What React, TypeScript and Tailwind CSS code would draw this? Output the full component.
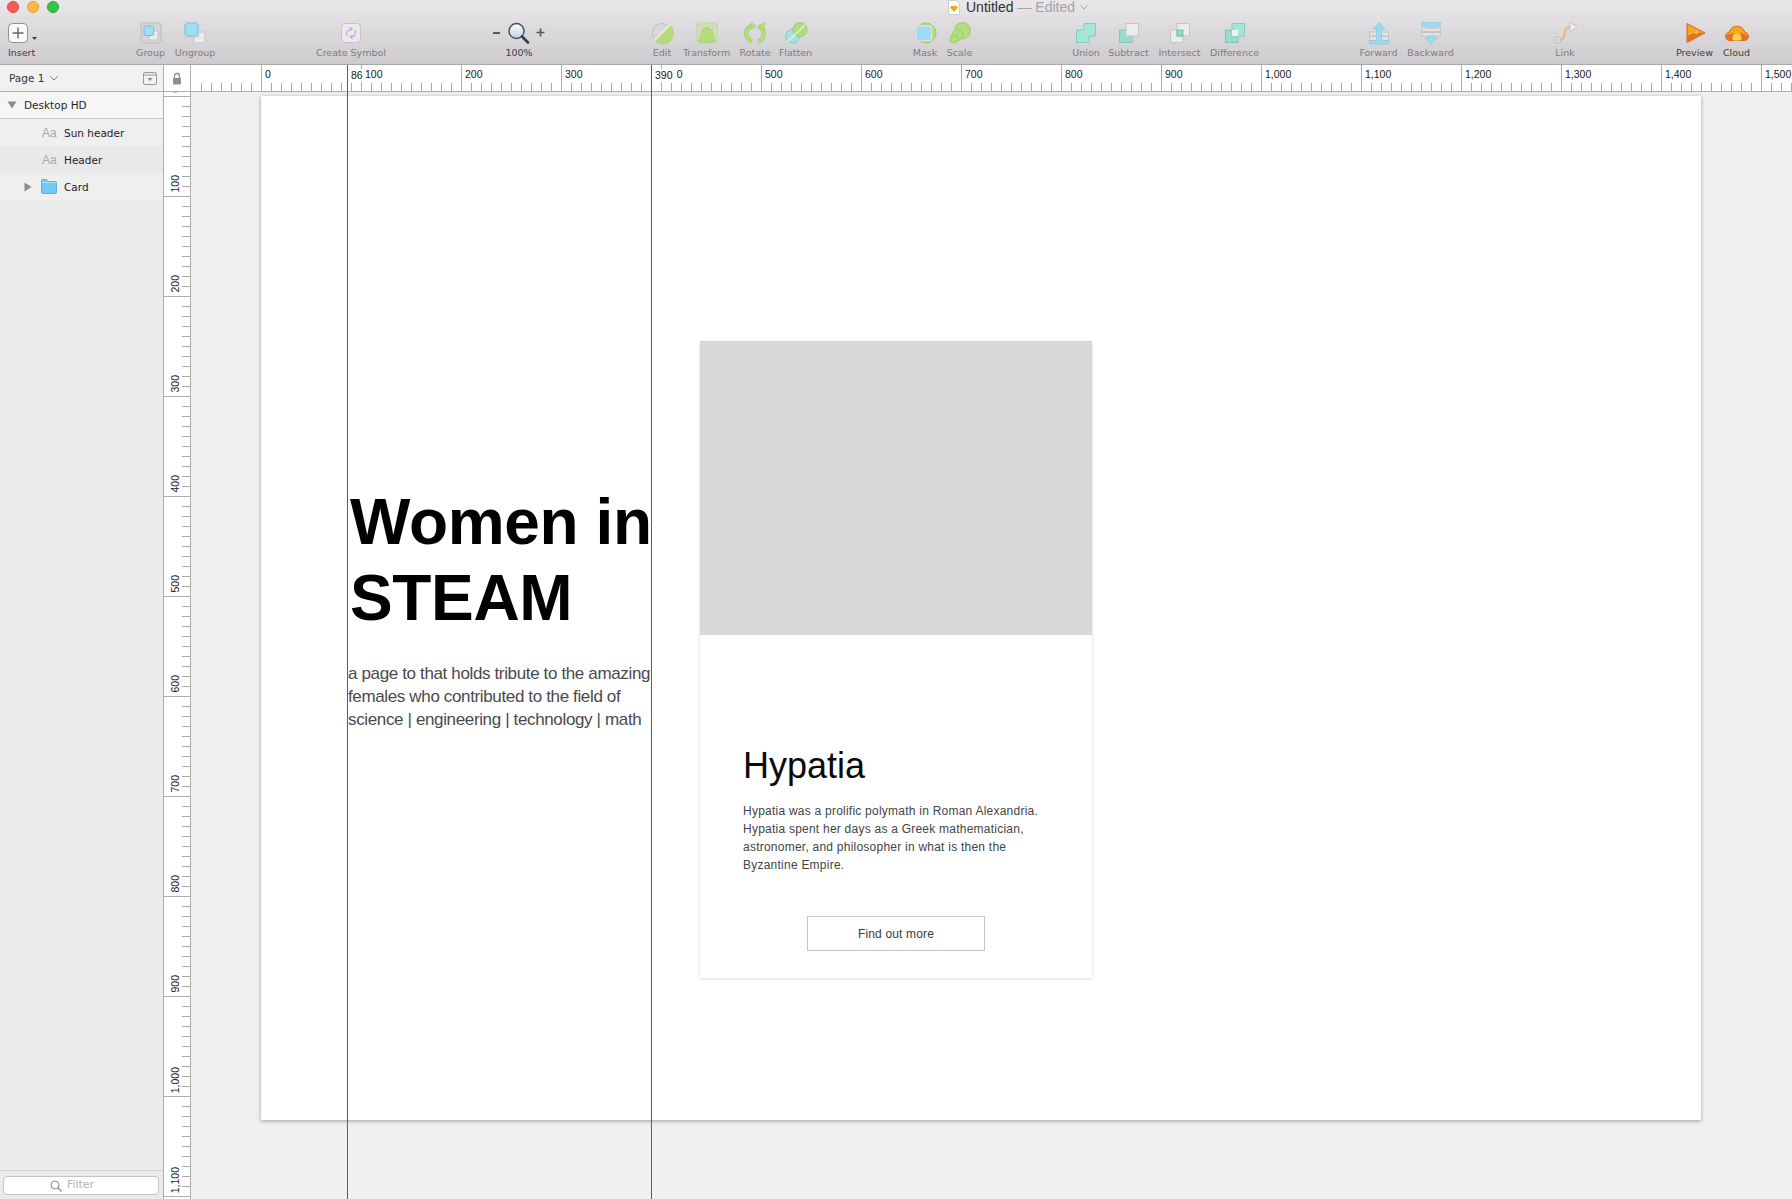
import React from 'react';

const LABEL = "font-['DejaVu_Sans',sans-serif]";
const RULER = "font-['Liberation_Sans',sans-serif]";

const Handles = ({ pts }: { pts: [number, number][] }) => (
  <>
    {pts.map(([x, y], i) => (
      <rect key={i} x={x - 1} y={y - 1} width="2" height="2" fill="#f4f4f4" stroke="#bdbdbd" strokeWidth="0.5" />
    ))}
  </>
);

const Svg = ({ children, w = 24 }: { children: React.ReactNode; w?: number }) => (
  <svg width={w} height="24" viewBox={`0 0 ${w} 24`} className="shrink-0">
    {children}
  </svg>
);

const icons: Record<string, React.ReactNode> = {
  Insert: (
    <Svg w={30}>
      <rect x="1.5" y="2.5" width="19" height="19" rx="4" fill="#fafafa" stroke="#8f8f8f" />
      <path d="M11 6.5v11M5.5 12h11" stroke="#6a6a6a" strokeWidth="1.4" />
      <path d="M25 16h5l-2.5 3z" fill="#3c3c3c" />
    </Svg>
  ),
  Group: (
    <Svg>
      <rect x="2" y="2" width="20" height="20" fill="#d6d4d6" stroke="#bcbcbc" />
      <rect x="10" y="10" width="9" height="9" fill="#ececec" stroke="#c4c4c4" />
      <rect x="5" y="5" width="9.5" height="9.5" rx="1.5" fill="#a0dcf2" stroke="#72bedb" />
      <Handles pts={[[2, 2], [22, 2], [2, 22], [22, 22]]} />
    </Svg>
  ),
  Ungroup: (
    <Svg>
      <rect x="11" y="11" width="11" height="11" fill="#ececec" stroke="#c4c4c4" />
      <rect x="2" y="2" width="13" height="13" rx="1" fill="#a0dcf2" stroke="#72bedb" />
      <Handles pts={[[2, 2], [15, 2], [2, 15], [15, 15], [22, 11], [11, 22], [22, 22]]} />
    </Svg>
  ),
  'Create Symbol': (
    <Svg>
      <rect x="2.5" y="2.5" width="19" height="19" rx="3.5" fill="#ebe9eb" stroke="#c6c6c6" />
      <path d="M8 15c-1.500-3 .5-7 4-7M16 9c1.500 3-.5 7-4 7" fill="none" stroke="#d79cea" strokeWidth="1.2" />
      <path d="M10.500 6l2.500 2-2.500 2M13.500 14l-2.500 2 2.500 2" fill="none" stroke="#d79cea" strokeWidth="1.2" />
    </Svg>
  ),
  Edit: (
    <Svg>
      <circle cx="12" cy="12" r="9.5" fill="#dad8da" stroke="#bdbdbd" />
      <path d="M20 4.5A10 10 0 0 1 5 20z" fill="#b4dc7c" stroke="#a0cb68" strokeWidth="0.6" />
      <path d="M4 20L20 4" stroke="#f2f2f2" strokeWidth="1.2" />
    </Svg>
  ),
  Transform: (
    <Svg>
      <rect x="2" y="2" width="20" height="20" fill="#cfe2ad" stroke="#c6cfb6" />
      <path d="M7.5 7h9L20 21H4z" fill="#b4dc7c" stroke="#a0cb68" strokeWidth="0.6" />
      <Handles pts={[[2, 2], [22, 2], [2, 22], [22, 22], [7.5, 7], [16.5, 7]]} />
    </Svg>
  ),
  Rotate: (
    <Svg>
      <path d="M9.500 4.500A8 8 0 0 0 9 20" fill="none" stroke="#9fca68" strokeWidth="4.200" />
      <path d="M9.500 4.500A8 8 0 0 0 9 20" fill="none" stroke="#b4dc7c" strokeWidth="3.200" />
      <path d="M16 5.500A8 8 0 0 1 15 20.500" fill="none" stroke="#9fca68" strokeWidth="4.200" />
      <path d="M16 5.500A8 8 0 0 1 15 20.500" fill="none" stroke="#b4dc7c" strokeWidth="3.200" />
      <path d="M8 9V1l5 4zM22 1l-1 8-7-3z" fill="#b4dc7c" stroke="#9fca68" strokeWidth="0.500" />
    </Svg>
  ),
  Flatten: (
    <Svg>
      <circle cx="8.500" cy="15" r="7" fill="#a4e3da" stroke="#86cbc0" />
      <circle cx="16" cy="8.500" r="7" fill="#b4dc7c" stroke="#a0cb68" />
      <path d="M3 21L21 4" stroke="#e8f4e8" strokeWidth="1.100" />
    </Svg>
  ),
  Mask: (
    <Svg>
      <circle cx="13" cy="12" r="10" fill="#b4dc7c" stroke="#a0cb68" />
      <rect x="3" y="5" width="15.500" height="14.500" rx="1" fill="#9ddcf2" stroke="#e0e0e0" strokeWidth="1.400" />
    </Svg>
  ),
  Scale: (
    <Svg>
      <circle cx="14.500" cy="9.500" r="8" fill="#b4dc7c" stroke="#a0cb68" />
      <circle cx="9.500" cy="14" r="5.500" fill="#b4dc7c" stroke="#a0cb68" />
      <circle cx="6" cy="18" r="4" fill="#b4dc7c" stroke="#a0cb68" />
    </Svg>
  ),
  Union: (
    <Svg>
      <path d="M10 2.500h11.500V15H15v6.500H2.500V9H10z" fill="#a6e6da" stroke="#84cdbf" />
    </Svg>
  ),
  Subtract: (
    <Svg>
      <rect x="2.500" y="9" width="12.500" height="12.500" fill="#96dccf" stroke="#7ec7ba" />
      <rect x="9" y="2.500" width="12.500" height="12.500" fill="#ececec" stroke="#c6c6c6" />
    </Svg>
  ),
  Intersect: (
    <Svg>
      <rect x="2.500" y="9" width="12.500" height="12.500" fill="#ececec" stroke="#c6c6c6" />
      <rect x="9" y="2.500" width="12.500" height="12.500" fill="#ececec" stroke="#c6c6c6" />
      <rect x="9" y="9" width="6" height="6" fill="#8edbcc" stroke="#6fc3b4" />
    </Svg>
  ),
  Difference: (
    <Svg>
      <rect x="2.500" y="9" width="12.500" height="12.500" fill="#96dccf" stroke="#7ec7ba" />
      <rect x="9" y="2.500" width="12.500" height="12.500" fill="#a6e6da" stroke="#84cdbf" />
      <rect x="9" y="9" width="6" height="6" fill="#f0f0f0" />
    </Svg>
  ),
  Forward: (
    <Svg>
      <rect x="2.500" y="11" width="19" height="4" fill="#e2e2e2" stroke="#c4c4c4" />
      <rect x="2.500" y="15.500" width="19" height="4" fill="#e2e2e2" stroke="#c4c4c4" />
      <path d="M12 1.500L18 8h-3.500v11.500h7V23h-19v-3.500h7V8H6z" fill="#9cdcf0" stroke="#7cc6de" strokeWidth="0.6" />
    </Svg>
  ),
  Backward: (
    <Svg>
      <path d="M2.500 1.500h19V5h-7v2h-5V5h-7z" fill="#9cdcf0" stroke="#7cc6de" strokeWidth="0.6" />
      <rect x="2.500" y="7" width="19" height="3.500" fill="#e2e2e2" stroke="#c4c4c4" />
      <rect x="2.500" y="11.500" width="19" height="3.500" fill="#e2e2e2" stroke="#c4c4c4" />
      <path d="M9.500 15.500h5V17H18l-6 6-6-6h3.500z" fill="#9cdcf0" stroke="#7cc6de" strokeWidth="0.6" />
    </Svg>
  ),
  Link: (
    <Svg>
      <path d="M5 19c6 0 6-3 7-8 .6-3 2-5 6-5" fill="none" stroke="#e8b98a" strokeWidth="2.600" />
      <circle cx="4.500" cy="19" r="3" fill="#ececec" stroke="#b8b8b8" />
      <circle cx="4.500" cy="19" r="0.900" fill="#999" />
      <path d="M17 1l7 5-7 5z" fill="#efefef" stroke="#c4c4c4" />
    </Svg>
  ),
  Preview: (
    <Svg>
      <path d="M4 2.500L22 12 4 21.500z" fill="#f6a623" stroke="#d9651c" />
      <path d="M4 21.500L22 12l-9-.5L4 15z" fill="#e3731f" />
      <circle cx="13.500" cy="11.500" r="1.500" fill="#f8c855" />
    </Svg>
  ),
  Cloud: (
    <Svg>
      <path d="M5 19.500c-3 0-4.500-2-4.500-4.200 0-2.300 1.700-4 3.800-4 .8-3.700 4-6 7.700-6s6.900 2.300 7.700 6c2.100 0 3.800 1.700 3.800 4 0 2.200-1.500 4.200-4.500 4.200z" fill="#f5a623" stroke="#d9651c" />
      <path d="M7 19.500c-1-2-1-6 1-7.500M17 19.500c1-2 1-6-1-7.500" fill="none" stroke="#d9651c" strokeWidth="1.200" />
      <path d="M8 19.500c0-3 1-7 4-7s4 4 4 7z" fill="#fbd35a" />
      <path d="M1 15.500c0 2 1.500 4 4 4h2c-1-2-1-4 0-6-2-1-5 0-6 2zM23 15.500c0 2-1.500 4-4 4h-2c1-2 1-4 0-6 2-1 5 0 6 2z" fill="#e3731f" />
    </Svg>
  ),
};

const Tool = ({ label, className, dark }: { label: string; className: string; dark?: boolean }) => (
  <div className={`flex flex-col items-center shrink-0 ${className}`}>
    <div className="h-[25px] flex items-center justify-center">{icons[label]}</div>
    <div className={`${LABEL} pt-[1px] text-[9.5px] leading-[14px] whitespace-nowrap ${dark ? 'text-[#3e3e3e]' : 'text-[#7f7d7f]'}`}>
      {label}
    </div>
  </div>
);

const Toolbar = () => (
  <header className="h-[65px] shrink-0 border-b border-[#a9a9a9] bg-gradient-to-b from-[#e9e7e9] to-[#cdcbcd]">
    <div className="h-[20px] flex items-start relative">
      <div className="flex gap-[8px] pl-[7px] pt-[1px]">
        <span className="size-[12px] rounded-full bg-[#fc5b57] border border-[#e2463f]" />
        <span className="size-[12px] rounded-full bg-[#fdbc40] border border-[#dea034]" />
        <span className="size-[12px] rounded-full bg-[#33c748] border border-[#27aa35]" />
      </div>
      <div className={`ml-[889px] flex items-center h-[15px] ${RULER} text-[14px]`}>
        <svg width="12" height="15" viewBox="0 0 12 15" className="mr-[6px]">
          <path d="M0.500 0.500h8l3 3v11h-11z" fill="#fdfdfd" stroke="#cfcfcf" />
          <path d="M3 6h6l1 1.500L6 12 2 7.500z" fill="#f5a623" />
        </svg>
        <span className="text-[#303030]">Untitled</span>
        <span className="text-[#a5a3a5] ml-[4px]">— Edited</span>
        <svg width="8" height="5" viewBox="0 0 8 5" className="ml-[5px]">
          <path d="M0.500 0.500L4 4l3.500-3.500" fill="none" stroke="#a5a3a5" />
        </svg>
      </div>
    </div>
    <div className="flex items-start">
      <Tool label="Insert" dark className="w-[27px] ml-[8px] [&>div:first-child]:w-[30px]" />
      <div className="flex gap-[10px] ml-[101px]">
        <Tool label="Group" className="w-[29px]" />
        <Tool label="Ungroup" className="w-[40px]" />
      </div>
      <Tool label="Create Symbol" className="w-[70px] ml-[101px]" />
      <div className="w-[58px] ml-[104px] flex flex-col items-center shrink-0">
        <div className="h-[25px] w-full flex items-center justify-between px-[3px]">
          <span className="w-[7px] h-[2px] bg-[#5a5a5a]" />
          <svg width="24" height="24" viewBox="0 0 24 24" className="shrink-0">
            <defs>
              <linearGradient id="lens" x1="0" y1="0" x2="0" y2="1">
                <stop offset="0" stopColor="#ffffff" />
                <stop offset="1" stopColor="#bcd3ea" />
              </linearGradient>
            </defs>
            <circle cx="10.500" cy="10" r="7.500" fill="url(#lens)" stroke="#4e4e4e" strokeWidth="1.400" />
            <path d="M16 15.500l6 6" stroke="#3e3e3e" strokeWidth="2.600" strokeLinecap="round" />
          </svg>
          <svg width="9" height="9" viewBox="0 0 9 9" className="shrink-0">
            <path d="M4.500 0.500v8M0.500 4.500h8" stroke="#5a5a5a" strokeWidth="1.700" />
          </svg>
        </div>
        <div className={`${LABEL} pt-[1px] text-[9.5px] leading-[14px] text-[#3e3e3e]`}>100%</div>
      </div>
      <div className="flex gap-[10px] ml-[105px]">
        <Tool label="Edit" className="w-[18px]" />
        <Tool label="Transform" className="w-[47px] ml-[2px]" />
        <Tool label="Rotate" className="w-[30px]" />
        <Tool label="Flatten" className="w-[33px] -ml-[1px]" />
      </div>
      <div className="flex gap-[10px] ml-[101px]">
        <Tool label="Mask" className="w-[24px]" />
        <Tool label="Scale" className="w-[25px]" />
      </div>
      <div className="flex gap-[10px] ml-[101px]">
        <Tool label="Union" className="w-[26px]" />
        <Tool label="Subtract" className="w-[41px] -ml-[1px]" />
        <Tool label="Intersect" className="w-[41px]" />
        <Tool label="Difference" className="w-[49px]" />
      </div>
      <div className="flex gap-[10px] ml-[100px]">
        <Tool label="Forward" className="w-[39px]" />
        <Tool label="Backward" className="w-[45px]" />
      </div>
      <Tool label="Link" className="w-[18px] ml-[103px]" />
      <div className="flex gap-[10px] ml-[102px]">
        <Tool label="Preview" dark className="w-[37px]" />
        <Tool label="Cloud" dark className="w-[27px]" />
      </div>
    </div>
  </header>
);

const Tri = ({ right }: { right?: boolean }) => (
  <svg width="10" height="10" viewBox="0 0 10 10" className="shrink-0">
    <path d={right ? 'M1.500 0.500L8.500 5 1.500 9.500z' : 'M0.500 1.500h9L5 8.500z'} fill="#8a8a8a" />
  </svg>
);

const Aa = () => (
  <span className={`${RULER} text-[12px] text-[#a9a9a9] w-[14px] ml-[42px] mr-[8px]`}>Aa</span>
);

const rowText = `${LABEL} pt-[2px] text-[10.500px] text-[#1e1e1e] whitespace-nowrap`;

const Sidebar = () => (
  <aside className="w-[164px] shrink-0 border-r border-[#aeaeae] bg-[#ebebeb] flex flex-col">
    <div className="h-[27px] shrink-0 border-b border-[#b4b4b4] bg-[#f1f1f1] flex items-center pl-[9px] pr-[6px]">
      <span className={`${LABEL} pt-[2px] text-[10.500px] text-[#333]`}>Page 1</span>
      <svg width="8" height="5" viewBox="0 0 8 5" className="ml-[6px]">
        <path d="M0.500 0.500L4 4l3.500-3.500" fill="none" stroke="#777" />
      </svg>
      <svg width="14" height="13" viewBox="0 0 14 13" className="ml-auto">
        <rect x="0.500" y="0.500" width="13" height="12" rx="1.500" fill="#f2f2f2" stroke="#9a9a9a" />
        <path d="M1 3h12" stroke="#9a9a9a" />
        <path d="M4.500 6h5L7 9z" fill="#8a8a8a" />
      </svg>
    </div>
    <div className="h-[27px] shrink-0 border-b border-[#cbcbcb] bg-[#f6f6f6] flex items-center pl-[7px]">
      <Tri />
      <span className={`${rowText} ml-[7px]`}>Desktop HD</span>
    </div>
    <div className="h-[27px] shrink-0 bg-[#efefef] flex items-center">
      <Aa />
      <span className={rowText}>Sun header</span>
    </div>
    <div className="h-[27px] shrink-0 bg-[#e9e9e9] flex items-center">
      <Aa />
      <span className={rowText}>Header</span>
    </div>
    <div className="h-[27px] shrink-0 bg-[#efefef] flex items-center pl-[23px]">
      <Tri right />
      <svg width="16" height="15" viewBox="0 0 16 15" className="ml-[8px] mr-[7px] shrink-0">
        <path d="M0.500 1.500a1 1 0 0 1 1-1h4l1.500 2h7.500a1 1 0 0 1 1 1v10a1 1 0 0 1-1 1h-13a1 1 0 0 1-1-1z" fill="#71c7f5" stroke="#59b2e2" />
        <path d="M1 3.500h14" stroke="#a2ddfa" />
      </svg>
      <span className={rowText}>Card</span>
    </div>
    <div className="mt-auto h-[29px] border-t border-[#d2d2d2] px-[3px] pt-[5px]">
      <div className="h-[19px] w-[156px] rounded-[4px] border border-[#c4c4c4] bg-white flex items-center justify-center gap-[5px] pr-[18px]">
        <svg width="12" height="12" viewBox="0 0 12 12">
          <circle cx="5" cy="5" r="4" fill="none" stroke="#8a8a8a" />
          <path d="M8 8l3.500 3.500" stroke="#8a8a8a" strokeWidth="1.200" />
        </svg>
        <span className={`${LABEL} text-[11px] text-[#b4b4b4]`}>Filter</span>
      </div>
    </div>
  </aside>
);

const hCells = Array.from({ length: 16 }, (_, i) => i * 100);
const vCells = Array.from({ length: 12 }, (_, i) => i * 100);

const HTicks = ({ from = 10 }: { from?: number }) => (
  <svg width="100" height="8" viewBox="0 0 100 8" className="absolute left-0 bottom-0">
    {Array.from({ length: 9 }, (_, i) => from + i * 10).filter((x) => x < 100).map((x) => (
      <line key={x} x1={x - 0.5} x2={x - 0.5} y1="0" y2="8" stroke="#a8a8a8" />
    ))}
  </svg>
);

const TopRuler = () => (
  <div className="h-[27px] shrink-0 flex overflow-hidden border-b border-[#aeaeae] bg-white">
    <div className="w-[27px] shrink-0 border-r border-[#aeaeae] flex items-center justify-center">
      <svg width="10" height="13" viewBox="0 0 10 13">
        <path d="M2.500 6V4a2.500 2.500 0 0 1 5 0v2" fill="none" stroke="#8f8f8f" strokeWidth="1.300" />
        <rect x="1" y="6" width="8" height="6.500" rx="0.800" fill="#8f8f8f" />
      </svg>
    </div>
    <div className="w-[70px] shrink-0 relative">
      <svg width="70" height="8" viewBox="0 0 70 8" className="absolute left-0 bottom-0">
        {[10, 20, 30, 40, 50, 60].map((x) => (
          <line key={x} x1={x + 0.5} x2={x + 0.5} y1="0" y2="8" stroke="#a8a8a8" />
        ))}
      </svg>
    </div>
    {hCells.map((v) => (
      <div key={v} className="w-[100px] h-full shrink-0 relative border-l border-[#aeaeae]">
        <span className={`${RULER} block pl-[3px] pt-[3px] text-[10.500px] leading-[13px] text-[#1a1a1a]`}>
          {v.toLocaleString('en-US')}
        </span>
        <HTicks />
      </div>
    ))}
  </div>
);

const LeftRuler = () => (
  <div className="w-[27px] shrink-0 h-full overflow-hidden border-r border-[#aeaeae] bg-white">
    <div className="-mt-[96px]">
      {vCells.map((v) => (
        <div key={v} className="h-[100px] border-b border-[#aeaeae] flex relative box-content -mb-[1px]">
          <span className={`${RULER} pr-[6px] pt-[3px] self-end text-[10.500px] leading-[10px] text-[#1a1a1a] whitespace-nowrap [writing-mode:vertical-rl] rotate-180`}>
            {v.toLocaleString('en-US')}
          </span>
          <svg width="8" height="100" viewBox="0 0 8 100" className="ml-auto shrink-0">
            {[10, 20, 30, 40, 50, 60, 70, 80, 90].map((y) => (
              <line key={y} x1="0" x2="8" y1={y + 0.5} y2={y + 0.5} stroke="#a8a8a8" />
            ))}
          </svg>
        </div>
      ))}
    </div>
  </div>
);

const Card = () => (
  <article className="w-[392px] h-[637px] ml-[49px] mt-[245px] shrink-0 bg-white shadow-[0_1px_3px_rgba(0,0,0,0.16)] font-['Liberation_Sans',sans-serif]">
    <div className="h-[294px] bg-[#d8d8d8]" />
    <div className="px-[43px]">
      <h2 className="mt-[109px] text-[36px] leading-[44px] font-normal text-[#0a0a0a]">Hypatia</h2>
      <p className="mt-[14px] w-[300px] text-[12px] leading-[18px] tracking-[0.235px] text-[#444444]">
        Hypatia was a prolific polymath in Roman Alexandria. Hypatia spent her days as a Greek mathematician,
        astronomer, and philosopher in what is then the Byzantine Empire.
      </p>
    </div>
    <button className="block mx-auto mt-[42px] w-[178px] h-[35px] border border-[#c6c6c6] bg-white text-[12px] tracking-[0.15px] text-[#3c3c3c]">
      Find out more
    </button>
  </article>
);

const Artboard = () => (
  <div className="w-[1440px] h-[1024px] shrink-0 bg-white shadow-[0_1px_4px_rgba(0,0,0,0.35)] flex items-start pl-[86px]">
    <div className="w-[304px] shrink-0 mt-[388px] font-['Liberation_Sans',sans-serif]">
      <h1 className="text-[64px] leading-[76px] font-bold text-black tracking-[-0.35px] pl-[3px] whitespace-nowrap">
        Women in
        <br />
        STEAM
      </h1>
      <p className="mt-[26px] w-[310px] pl-[1px] text-[17px] leading-[23px] text-[#4a4a4a] tracking-[-0.36px]">
        a page to that holds tribute to the amazing females who contributed to the field of science | engineering |
        technology | math
      </p>
    </div>
    <Card />
  </div>
);

export default function App() {
  return (
    <div className="relative w-[1792px] h-[1199px] overflow-hidden flex flex-col bg-[#f0f0f0]">
      <Toolbar />
      <div className="flex-1 flex min-h-0">
        <Sidebar />
        <div className="flex-1 min-w-0 flex flex-col">
          <TopRuler />
          <div className="flex-1 min-h-0 flex">
            <LeftRuler />
            <main className="flex-1 min-w-0 overflow-hidden bg-[#f0f0f0] pl-[70px] pt-[4px]">
              <Artboard />
            </main>
          </div>
        </div>
      </div>
      <div className="absolute left-[347px] top-[65px] bottom-0 w-px bg-[#e0232f]" />
      <div className="absolute left-[651px] top-[65px] bottom-0 w-px bg-[#e0232f]" />
      <span className={`absolute left-[351px] top-[69px] ${RULER} text-[10.500px] leading-[13px] text-[#1a1a1a] bg-white/85`}>86</span>
      <span className={`absolute left-[655px] top-[69px] ${RULER} text-[10.500px] leading-[13px] text-[#1a1a1a] bg-white/90 pr-[4px]`}>390</span>
    </div>
  );
}
